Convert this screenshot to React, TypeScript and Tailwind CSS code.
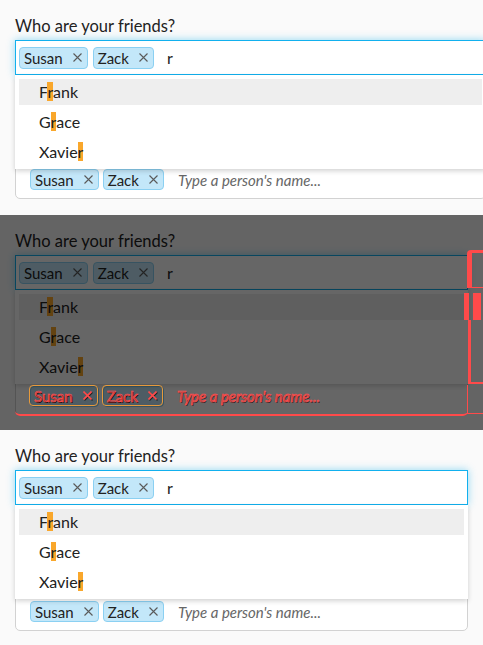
import React from "react";

type Mode = "normal" | "ghost";

function XIcon({ red }: { red?: boolean }) {
  return (
    <svg width="9" height="9" viewBox="0 0 9 9" className="shrink-0">
      <path
        d="M0.5 0.5 L8.5 8.5 M8.5 0.5 L0.5 8.5"
        stroke={red ? "#ff4a4a" : "#5a5a5a"}
        strokeWidth={red ? 1.6 : 1.1}
        fill="none"
      />
    </svg>
  );
}

function Tag({ name, h, ghost }: { name: string; h: "big" | "small"; ghost?: boolean }) {
  return (
    <div
      className={
        "flex items-center gap-[10px] rounded-[4px] border pl-[4px] pr-[5px] text-[15px] leading-[18px] " +
        (h === "big" ? "h-[22px] " : "h-[21px] ") +
        (ghost
          ? "border-[#e69a3c] border-[1.5px] bg-transparent text-[#ff4a4a]/40 [-webkit-text-stroke:0.7px_#ff4a4a]"
          : "border-[#8bd0f2] bg-[#c3e7f9] text-[#222]")
      }
    >
      <span>{name}</span>
      <XIcon red={ghost} />
    </div>
  );
}

function Item({ pre, post, active }: { pre: string; post: string; active?: boolean }) {
  return (
    <div
      className={
        "flex h-[26px] items-center pl-[20px] text-[16px] leading-[20px] text-[#222] " +
        (active ? "bg-[#eeeeee]" : "")
      }
    >
      <span>
        {pre}
        <span className="bg-[#f9a72b]">r</span>
        {post}
      </span>
    </div>
  );
}

function Widget({ wide, mode, lower }: { wide?: boolean; mode: Mode; lower?: boolean }) {
  const ghost = mode === "ghost";
  return (
    <div className={"relative " + (wide ? "w-[471px]" : "w-[453px]")}>
      <div
        className={
          "mb-[4px] text-[16.5px] leading-[20px] " + (ghost ? "text-transparent" : "text-[#222]")
        }
      >
        Who are your friends?
      </div>
      <div className="relative">
        <div
          className={
            "flex h-[35px] items-center gap-[5px] border px-[3px] " +
            (ghost
              ? "invisible"
              : "border-[#12b0ee] bg-white shadow-[0_0_8px_rgba(18,176,238,0.45)]")
          }
        >
          <Tag name="Susan" h="big" />
          <Tag name="Zack" h="big" />
          <span className="ml-[8px] text-[16px] leading-[20px] text-[#222]">r</span>
        </div>
        <div
          className={
            "flex items-center gap-[4px] rounded-b-[5px] pl-[14px] " +
            (lower ? "mt-[87px] h-[39px] " : "mt-[85px] h-[39px] ") +
            (ghost
              ? "border-b-[2px] border-[#ff4a4a] bg-transparent"
              : "border border-[#d2d2d2] bg-white")
          }
        >
          <Tag name="Susan" h="small" ghost={ghost} />
          <Tag name="Zack" h="small" ghost={ghost} />
          <span
            className={
              "ml-[10px] text-[15px] italic leading-[18px] " +
              (ghost
                ? "text-[#ff4a4a]/40 [-webkit-text-stroke:0.7px_#ff4a4a]"
                : "text-[#666]")
            }
          >
            Type a person's name...
          </span>
        </div>
        {!ghost && (
          <div className="absolute left-0 right-0 top-[35px] flex flex-col gap-[4px] bg-white p-[4px] shadow-[0_2px_5px_rgba(0,0,0,0.18)]">
            <Item pre="F" post="ank" active />
            <Item pre="G" post="ace" />
            <Item pre="Xavie" post="" />
          </div>
        )}
      </div>
    </div>
  );
}

export default function App() {
  return (
    <div className="h-[645px] w-[483px] overflow-hidden bg-[#fafafa] font-['Lato',sans-serif]">
      <div className="h-[215px] overflow-hidden px-[15px] pt-[16px]">
        <Widget wide mode="normal" />
      </div>
      <div className="relative h-[215px] overflow-hidden bg-[#fafafa] px-[15px] pt-[16px]">
        <Widget mode="normal" lower />
        <div className="absolute inset-0 bg-black/60" />
        <div className="absolute left-0 top-0 w-full px-[15px] pt-[16px]">
          <Widget mode="ghost" lower />
        </div>
        <div className="absolute left-[467px] top-[35px] h-[38px] w-[20px] rounded-tl-[4px] border-l-[5px] border-t-[3px] border-[#ff4a4a]" />
        <div className="absolute left-[472px] top-[72px] h-[1px] w-[11px] bg-[#ff4a4a]" />
        <div className="absolute left-[464px] top-[78px] h-[27px] w-[5px] bg-[#ff4a4a]" />
        <div className="absolute left-[473px] top-[78px] h-[27px] w-[8px] bg-[#ff4a4a]" />
        <div className="absolute left-[468px] top-[105px] h-[64px] w-[3px] bg-[#ff4a4a]" />
        <div className="absolute left-[469px] top-[167px] h-[2px] w-[14px] bg-[#ff4a4a]" />
        <div className="absolute left-[467px] top-[170px] h-[28px] w-[1px] bg-[#ff4a4a]" />
        <div className="absolute left-[467px] top-[198px] h-[1px] w-[16px] bg-[#ff4a4a]" />
      </div>
      <div className="h-[215px] overflow-hidden px-[15px] pt-[16px]">
        <Widget mode="normal" lower />
      </div>
    </div>
  );
}
